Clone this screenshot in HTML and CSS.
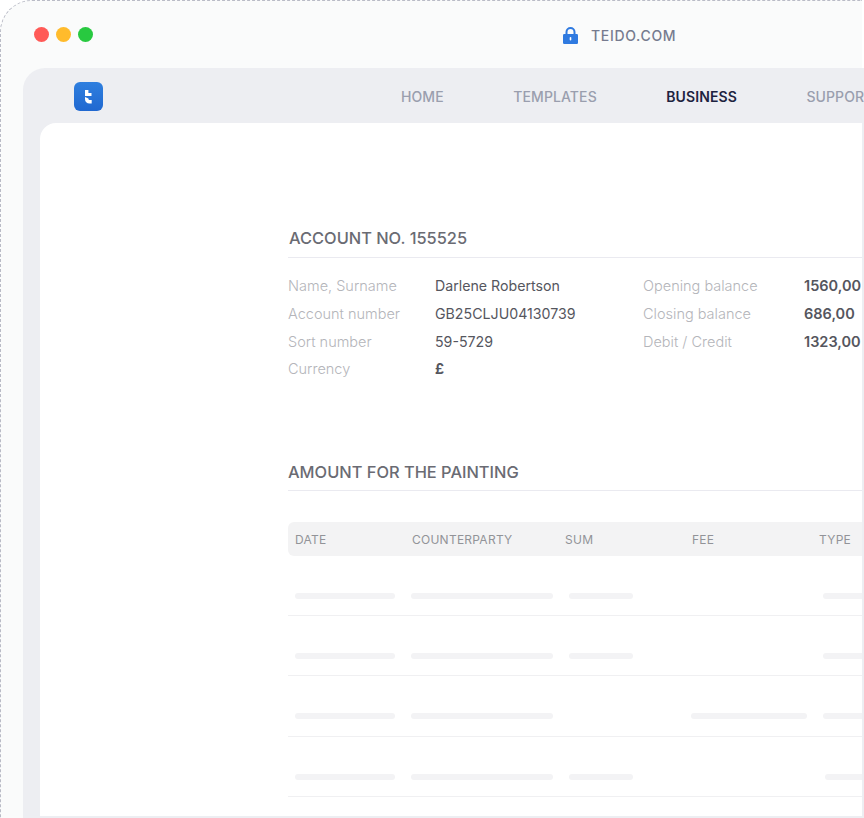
FILE: index.html
```html
<!DOCTYPE html>
<html lang="en">
<head>
    <meta charset="UTF-8">
    <meta name="viewport" content="width=device-width, initial-scale=1.0">
    <title>Teido - Business</title>
    <link rel="stylesheet" href="styles.css">
</head>
<body>
    <div class="window">
        <div class="titlebar">
            <div class="dots">
                <span class="dot dot-red"></span>
                <span class="dot dot-yellow"></span>
                <span class="dot dot-green"></span>
            </div>
            <div class="address">
                <svg class="lock" width="15" height="17" viewBox="0 0 15 17">
                    <path d="M3.500 8V5a4 4 0 0 1 8 0v3" fill="none" stroke="#2f7ae0" stroke-width="2"/>
                    <rect x="0" y="7" width="15" height="10" rx="1.200" fill="#2f7ae0"/>
                    <rect x="6.700" y="10" width="1.600" height="3.600" rx="0.800" fill="#fff"/>
                </svg>
                <span>TEIDO.COM</span>
            </div>
        </div>

        <div class="app">
            <div class="topnav">
                <svg class="logo" width="29" height="29" viewBox="0 0 29 29">
                    <defs>
                        <linearGradient id="logo-bg" x1="0" y1="0" x2="0" y2="1">
                            <stop offset="0" stop-color="#2f7fdf"/>
                            <stop offset="1" stop-color="#2068d0"/>
                        </linearGradient>
                    </defs>
                    <rect width="29" height="29" rx="6" fill="url(#logo-bg)"/>
                    <path d="M11 8h3.400v3h3.100v3h-6.500z" fill="#fff"/>
                    <path d="M11 15l3.400 1.400c.1 1 .6 1.700 1.500 1.700h1.800v3.500h-2.100c-2.800 0-4.600-1.700-4.600-4.500z" fill="#fff"/>
                </svg>
                <nav class="menu">
                    <a class="menu-item">HOME</a>
                    <a class="menu-item">TEMPLATES</a>
                    <a class="menu-item active">BUSINESS</a>
                    <a class="menu-item">SUPPORT</a>
                </nav>
            </div>

            <div class="card">
                <section class="account">
                    <h2 class="section-title first">ACCOUNT NO. 155525</h2>
                    <div class="details">
                        <span class="label">Name, Surname</span>
                        <span class="value">Darlene Robertson</span>
                        <span class="label">Opening balance</span>
                        <span class="amount">1560,00</span>

                        <span class="label">Account number</span>
                        <span class="value">GB25CLJU04130739</span>
                        <span class="label">Closing balance</span>
                        <span class="amount">686,00</span>

                        <span class="label">Sort number</span>
                        <span class="value">59-5729</span>
                        <span class="label">Debit / Credit</span>
                        <span class="amount">1323,00</span>

                        <span class="label">Currency</span>
                        <span class="value strong">£</span>
                    </div>
                </section>

                <section class="painting">
                    <h2 class="section-title">AMOUNT FOR THE PAINTING</h2>
                    <div class="table-head">
                        <span>DATE</span>
                        <span>COUNTERPARTY</span>
                        <span>SUM</span>
                        <span>FEE</span>
                        <span>TYPE</span>
                    </div>
                    <div class="table-row">
                        <i class="bar bar-date"></i><i class="bar bar-party"></i><i class="bar bar-sum"></i><i></i><i class="bar bar-type"></i>
                    </div>
                    <div class="table-row">
                        <i class="bar bar-date"></i><i class="bar bar-party"></i><i class="bar bar-sum"></i><i></i><i class="bar bar-type"></i>
                    </div>
                    <div class="table-row">
                        <i class="bar bar-date"></i><i class="bar bar-party"></i><i></i><i class="bar bar-fee"></i><i class="bar bar-type"></i>
                    </div>
                    <div class="table-row">
                        <i class="bar bar-date"></i><i class="bar bar-party"></i><i class="bar bar-sum"></i><i></i><i class="bar bar-type shifted"></i>
                    </div>
                </section>
            </div>
        </div>
    </div>
</body>
</html>
```

FILE: styles.css
```css
html, body { margin: 0; padding: 0; }
body { width: 864px; height: 818px; overflow: hidden; background-color: #fff; font-family: Inter, "Noto Sans", sans-serif; }

.window { width: 862px; height: 818px; box-sizing: border-box; border: 1px dashed #b9bbc6; border-right: none; border-bottom: none; border-top-left-radius: 32px; background-color: #fafbfb; display: flex; flex-direction: column; }

.titlebar { height: 67px; flex: none; position: relative; display: flex; align-items: center; }
.dots { display: flex; gap: 7px; margin-left: 33px; margin-top: -1px; }
.dot { width: 15px; height: 15px; border-radius: 50%; }
.dot-red { background-color: #ff5a57; }
.dot-yellow { background-color: #ffbb2c; }
.dot-green { background-color: #28c940; }
.address { display: flex; align-items: center; gap: 13px; margin-left: 470px; margin-top: 1px; font-size: 14px; font-weight: 500; letter-spacing: 0.7px; color: #767b8f; }
.lock { flex: none; }

.app { flex: 1; width: 841px; margin-left: 22px; background-color: #edeef2; border-top-left-radius: 22px; display: flex; flex-direction: column; min-height: 0; }
.topnav { height: 55px; flex: none; display: flex; align-items: center; }
.logo { margin-left: 51px; margin-top: 1px; flex: none; }
.menu { display: flex; gap: 69.5px; margin-left: 298px; white-space: nowrap; margin-top: 1px; letter-spacing: 0.1px; }
.menu-item { font-size: 14px; font-weight: 500; color: #9a9eae; }
.menu-item.active { font-weight: 600; color: #1d2340; }

.card { flex: 1; margin-left: 17px; width: 822px; height: 693px; box-sizing: border-box; margin-bottom: 2px; background-color: #fff; border-top-left-radius: 16px; padding: 104px 0 0 248px; overflow: hidden; }

.section-title { margin: 0; padding-bottom: 8px; font-size: 16.400px; line-height: 22px; font-weight: 500; color: #6a6b73; border-bottom: 1px solid #eaeaf0; white-space: nowrap; }
.section-title.first { padding-left: 1px; }

.details { display: grid; grid-template-columns: 147px 208px 161px auto; grid-auto-rows: 27.7px; margin-top: 14px; align-items: center; font-size: 14px; white-space: nowrap; }
.label { color: #b4b5ba; font-weight: 300; font-size: 14.500px; }
.value { color: #55565e; font-size: 14.200px; }
.value.strong { font-weight: 700; }
.amount { color: #55565e; font-weight: 600; font-size: 14.500px; }

.painting { margin-top: 78px; }
.painting .section-title { padding-bottom: 7px; }

.table-head { margin-top: 31px; height: 34px; box-sizing: border-box; padding: 1px 0 0 7px; background-color: #f3f3f4; border-radius: 6px 0 0 6px; display: grid; grid-template-columns: 117px 153px 127px 127px auto; align-items: center; font-size: 12px; font-weight: 400; letter-spacing: 0.25px; color: #929398; white-space: nowrap; }

.table-row { height: 60.3px; box-sizing: border-box; padding: 37px 0 0 7px; border-bottom: 1px solid #f0f0f2; display: grid; grid-template-columns: 116px 158px 122px 132px auto; align-items: start; }
.bar { display: block; height: 6px; border-radius: 3px; background-color: #f3f3f5; }
.bar-date { width: 100px; }
.bar-party { width: 142px; }
.bar-sum { width: 64px; }
.bar-fee { width: 116px; }
.bar-type { width: 60px; }
.bar-type.shifted { margin-left: 2px; }
```
